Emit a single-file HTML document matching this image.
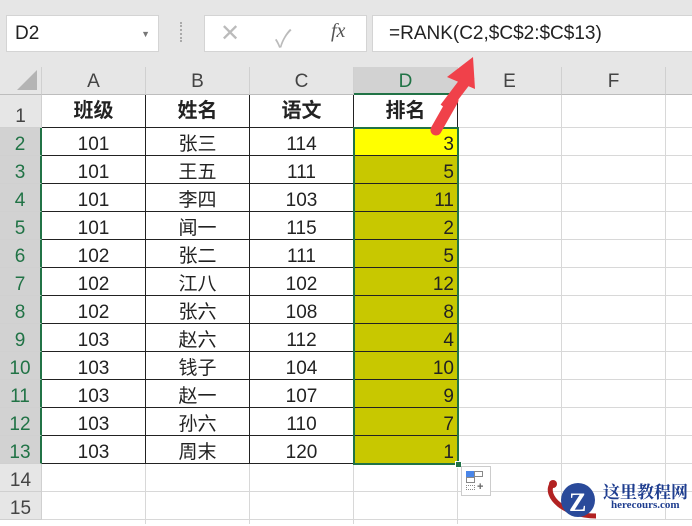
<!DOCTYPE html>
<html><head><meta charset="utf-8"><style>
*{margin:0;padding:0;box-sizing:border-box}
body{width:692px;height:519px;overflow:hidden;background:#fff;font-family:"Liberation Sans","Noto Sans CJK SC",sans-serif;position:relative}
.top{position:absolute;left:0;top:0;width:692px;height:67px;background:#e6e6e6}
.box{position:absolute;background:#fff;border:1px solid #d4d4d4}
.hdr{position:absolute;top:67px;height:28px;background:#e6e6e6;border-right:1px solid #d0d0d0;border-bottom:1px solid #bdbdbd;text-align:center;font-size:19px;color:#444;line-height:30px}
.rh{position:absolute;left:0;width:42px;background:#e6e6e6;border-bottom:1px solid #d0d0d0;font-size:19px;color:#444;text-align:center}
.c{position:absolute;height:28px;line-height:33px;text-align:center;font-size:19px;color:#222;border-right:1px solid #222;border-bottom:1px solid #222}
.g{position:absolute;background:#d8d8d8}
</style></head><body>
<div class="top"></div>
<div class="box" style="left:6px;top:15px;width:153px;height:37px;font-size:19px;line-height:36px;padding-left:8px;color:#222">D2<span style="position:absolute;right:8px;top:0;font-size:9px;color:#777">▼</span></div>
<div style="position:absolute;left:180px;top:22px;width:2px;height:20px;border-left:2px dotted #aaa"></div>
<div class="box" style="left:204px;top:15px;width:163px;height:37px;">
<span style="position:absolute;left:15px;top:3px;font-size:24px;color:#bbb">✕</span>
<span style="position:absolute;left:70px;top:3px;font-size:24px;color:#bbb">✓</span>
<span style="position:absolute;left:126px;top:4px;font-size:20px;color:#555;font-family:'Liberation Serif',serif;font-style:italic">fx</span></div>
<div class="box" style="left:372px;top:15px;width:330px;height:37px;font-size:19px;line-height:36px;padding-left:16px;color:#222">=RANK(C2,$C$2:$C$13)</div>
<div style="position:absolute;left:0;top:67px;width:42px;height:28px;background:#e6e6e6;border-right:1px solid #d0d0d0;border-bottom:1px solid #bdbdbd"><div style="position:absolute;right:4px;bottom:4px;width:0;height:0;border-left:20px solid transparent;border-bottom:20px solid #b4b4b4"></div></div>
<div class="hdr" style="left:42px;width:104px">A</div>
<div class="hdr" style="left:146px;width:104px">B</div>
<div class="hdr" style="left:250px;width:104px">C</div>
<div class="hdr" style="left:354px;width:104px;background:#d2d2d2;color:#217346;border-bottom:2px solid #217346">D</div>
<div class="hdr" style="left:458px;width:104px">E</div>
<div class="hdr" style="left:562px;width:104px">F</div>
<div class="hdr" style="left:666px;width:30px"></div>
<div class="g" style="left:561px;top:95px;width:1px;height:424px"></div>
<div class="g" style="left:665px;top:95px;width:1px;height:424px"></div>
<div class="g" style="left:457px;top:464px;width:1px;height:60px"></div>
<div class="g" style="left:145px;top:464px;width:1px;height:60px"></div>
<div class="g" style="left:249px;top:464px;width:1px;height:60px"></div>
<div class="g" style="left:353px;top:464px;width:1px;height:60px"></div>
<div id="rows"></div>
<svg style="position:absolute;left:0;top:0" width="692" height="519">
<path d="M436 130 L453 100" stroke="#f0414a" stroke-width="11" stroke-linecap="round"/>
<path d="M473 57 L447 77 L475 89 Z" fill="#f0414a"/>
<path d="M445 108 L470 75" stroke="#f0414a" stroke-width="11"/>
</svg>
<div style="position:absolute;left:461px;top:466px;width:30px;height:30px;border:1px solid #ccc;background:#fff">
<div style="position:absolute;left:4px;top:4px;width:8px;height:6px;background:#4a86e8"></div>
<div style="position:absolute;left:12px;top:4px;width:9px;height:6px;border:1px solid #888"></div>
<div style="position:absolute;left:4px;top:10px;width:9px;height:6px;border:1px solid #888"></div>
<div style="position:absolute;left:4px;top:18px;width:9px;height:5px;border:1px dotted #888"></div>
<div style="position:absolute;left:15px;top:14px;font-size:11px;color:#666;font-weight:bold">+</div></div>
<svg style="position:absolute;left:544px;top:476px" width="60" height="43">
<path d="M8 8 C0 20 20 40 52 40" stroke="#b22222" stroke-width="5" fill="none"/>
<circle cx="9" cy="8" r="4" fill="#b22222"/>
<circle cx="34" cy="24" r="17" fill="#2a4a9a"/>
<text x="25" y="35" font-size="26" font-weight="bold" fill="#fff" font-family="Liberation Serif">Z</text>
</svg>
<div style="position:absolute;left:603px;top:478px;font-size:17px;font-weight:bold;color:#1e3d8f;font-family:'Noto Serif CJK SC',serif">这里教程网</div>
<div style="position:absolute;left:611px;top:499px;font-size:11px;font-weight:bold;color:#1e3d8f;font-family:'Liberation Serif',serif">herecours.com</div>
<script>
(function(){
var d=[["班级","姓名","语文","排名"],["101","张三","114",3],["101","王五","111",5],["101","李四","103",11],["101","闻一","115",2],["102","张二","111",5],["102","江八","102",12],["102","张六","108",8],["103","赵六","112",4],["103","钱子","104",10],["103","赵一","107",9],["103","孙六","110",7],["103","周末","120",1]];
var h="";
for(var r=0;r<15;r++){
 var ty=r==0?95:128+(r-1)*28, ht=r==0?33:28;
 var sel=r>=1&&r<=12;
 h+='<div class="rh" style="top:'+ty+'px;height:'+ht+'px;line-height:'+(ht*2-22)+'px;'+(sel?'background:#d2d2d2;color:#217346;':'')+'border-right:'+(sel?'2px solid #217346':'1px solid #d0d0d0')+'">'+(r+1)+'</div>';
 if(r>12){h+='<div class="g" style="left:42px;top:'+(ty+ht-1)+'px;width:650px;height:1px"></div>';continue;}
 h+='<div class="g" style="left:458px;top:'+(ty+ht-1)+'px;width:234px;height:1px"></div>';
 for(var c=0;c<4;c++){
  var st='left:'+(42+c*104)+'px;top:'+ty+'px;width:104px;height:'+ht+'px;';
  if(r==0)st+='font-weight:bold;font-size:20px;line-height:33px;';
  if(c==3&&r>0){st+='text-align:right;padding-right:3px;background:'+(r==1?'#ffff00':'#c8c800')+';';}
  h+='<div class="c" style="'+st+'">'+d[r][c]+'</div>';
 }
}
h+='<div style="position:absolute;left:353px;top:127px;width:106px;height:338px;border:2px solid #217346"></div>';
h+='<div style="position:absolute;left:455px;top:461px;width:7px;height:7px;background:#217346;border:1px solid #fff"></div>';
document.getElementById("rows").innerHTML=h;
})();
</script>
</body></html>
